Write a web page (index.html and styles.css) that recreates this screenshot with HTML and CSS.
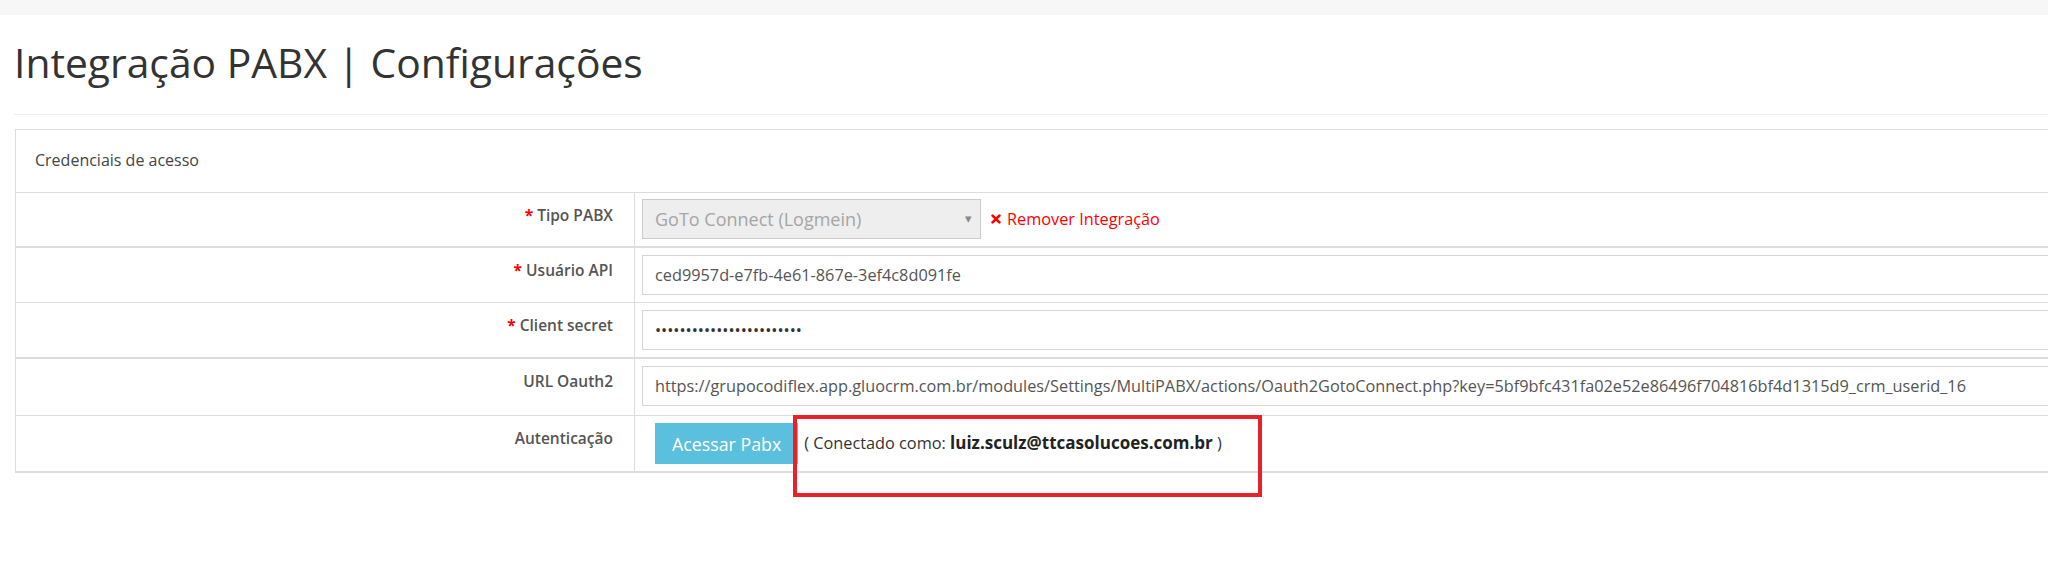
FILE: index.html
```html
<!DOCTYPE html>
<html lang="pt-BR">
<head>
<meta charset="utf-8">
<title>Integração PABX | Configurações</title>
<link rel="stylesheet" href="styles.css">
</head>
<body>
<div class="topbar"></div>
<main class="page">
  <h1 class="page-title">Integração PABX | Configurações</h1>
  <hr class="divider">
  <section class="panel">
    <div class="panel-heading">Credenciais de acesso</div>

    <div class="field-row field-row--thick field-row--first">
      <div class="field-label"><span class="req">*</span> Tipo PABX</div>
      <div class="field-value">
        <div class="select-wrap">
          <select class="select" disabled><option>GoTo Connect (Logmein)</option></select>
          <span class="select-arrow">&#9662;</span>
        </div>
        <a class="remove-link" href="#">
          <svg class="remove-icon" viewBox="0 0 10 10" width="10" height="10" aria-hidden="true"><path d="M1.6 1.6 L8.4 8.4 M8.4 1.6 L1.6 8.4" stroke="currentColor" stroke-width="2.7" stroke-linecap="round"/></svg>
          Remover Integração
        </a>
      </div>
    </div>

    <div class="field-row">
      <div class="field-label"><span class="req">*</span> Usuário API</div>
      <div class="field-value">
        <input class="text-input" type="text" value="ced9957d-e7fb-4e61-867e-3ef4c8d091fe" readonly>
      </div>
    </div>

    <div class="field-row field-row--thick">
      <div class="field-label"><span class="req">*</span> Client secret</div>
      <div class="field-value">
        <input class="text-input text-input--secret" type="password" value="abcdefghijklmnopqrstuvwx" readonly>
      </div>
    </div>

    <div class="field-row field-row--url">
      <div class="field-label">URL Oauth2</div>
      <div class="field-value">
        <input class="text-input" type="text" value="https://grupocodiflex.app.gluocrm.com.br/modules/Settings/MultiPABX/actions/Oauth2GotoConnect.php?key=5bf9bfc431fa02e52e86496f704816bf4d1315d9_crm_userid_16" readonly>
      </div>
    </div>

    <div class="field-row field-row--thick">
      <div class="field-label">Autenticação</div>
      <div class="field-value field-value--auth">
        <button class="btn-info" type="button">Acessar Pabx</button>
        <span class="auth-status">( Conectado como: <strong class="auth-user">luiz.sculz@ttcasolucoes.com.br</strong> )</span>
        <span class="highlight-box"></span>
      </div>
    </div>
  </section>
</main>
</body>
</html>
```
FILE: styles.css
```css
html {
  overflow: hidden;
}

html, body {
  margin: 0;
  padding: 0;
  background: #fff;
}

body {
  font-family: "Open Sans", "Liberation Sans", sans-serif;
  font-size: 16.3px;
  color: #333;
  min-height: 573px;
}

.topbar {
  height: 15px;
  background: #f7f7f7;
}

.page {
  padding-left: 14px;
  width: 2300px;
}

.page-title {
  margin: 23px 0 0;
  font-size: 40.8px;
  line-height: 48px;
  font-weight: 400;
  color: #333;
}

.divider {
  margin: 28px 0 0;
  border: 0;
  border-top: 1px solid #eee;
  height: 0;
}

.panel {
  margin: 14px 0 0 1px;
  border: 1px solid #ddd;
  border-bottom: 0;
  width: 2200px;
}

.panel-heading {
  padding: 20px 19px 21px;
  line-height: 21px;
  font-size: 16px;
  color: #444;
  border-bottom: 1px solid #ddd;
}

.field-row {
  display: grid;
  grid-template-columns: 619px 1fr;
  border-bottom: 1px solid #ddd;
}

.field-row--thick {
  border-bottom-width: 2px;
}

.field-label {
  box-sizing: border-box;
  border-right: 1px solid #ddd;
  text-align: right;
  padding: 12px 21px 0 0;
  font-size: 15.5px;
  line-height: 21px;
  font-weight: 600;
  color: #555;
}

.req {
  color: #f00;
  font-weight: 700;
}

.field-value {
  display: flex;
  align-items: center;
  padding: 7px 12px 7px 7px;
  position: relative;
}

.field-row--first .field-value {
  padding-top: 6px;
}

.field-row--url .field-value {
  padding-bottom: 9px;
}

.select-wrap {
  position: relative;
  width: 339px;
  height: 40px;
}

.select {
  appearance: none;
  -webkit-appearance: none;
  box-sizing: border-box;
  width: 100%;
  height: 40px;
  margin: 0;
  padding: 0 30px 0 12px;
  border: 1px solid #ccc;
  border-radius: 0;
  background: #eee;
  font-family: inherit;
  font-size: 18px;
  color: #a5a5a5;
  opacity: 1;
}

.select-arrow {
  position: absolute;
  right: 9px;
  top: 9px;
  font-size: 13px;
  line-height: 20px;
  color: #888;
}

.remove-link {
  display: flex;
  align-items: center;
  gap: 6px;
  margin-left: 10px;
  color: #f00;
  text-decoration: none;
  font-size: 16.3px;
}

.remove-icon {
  display: block;
  color: #f00;
}

.text-input {
  box-sizing: border-box;
  flex: 1;
  height: 40px;
  margin: 0;
  padding: 0 12px;
  border: 1px solid #d6d6d6;
  border-radius: 0;
  background: #fff;
  font-family: inherit;
  font-size: 16.3px;
  color: #555;
  outline: none;
}

.text-input--secret {
  color: #333;
}

.field-value--auth {
  padding-left: 20px;
}

.btn-info {
  height: 41px;
  padding: 0 17px;
  border: 0;
  border-radius: 0;
  background: #5bc0de;
  color: #fff;
  font-family: inherit;
  font-size: 17.8px;
}

.auth-status {
  margin-left: 6px;
  margin-top: -3px;
  color: #333;
  font-size: 16.3px;
}

.auth-user {
  font-size: 17px;
  font-weight: 700;
  color: #222;
}

.highlight-box {
  position: absolute;
  left: 158px;
  top: -1px;
  width: 469px;
  height: 82px;
  box-sizing: border-box;
  border: 4px solid #e8202a;
  pointer-events: none;
}
```
